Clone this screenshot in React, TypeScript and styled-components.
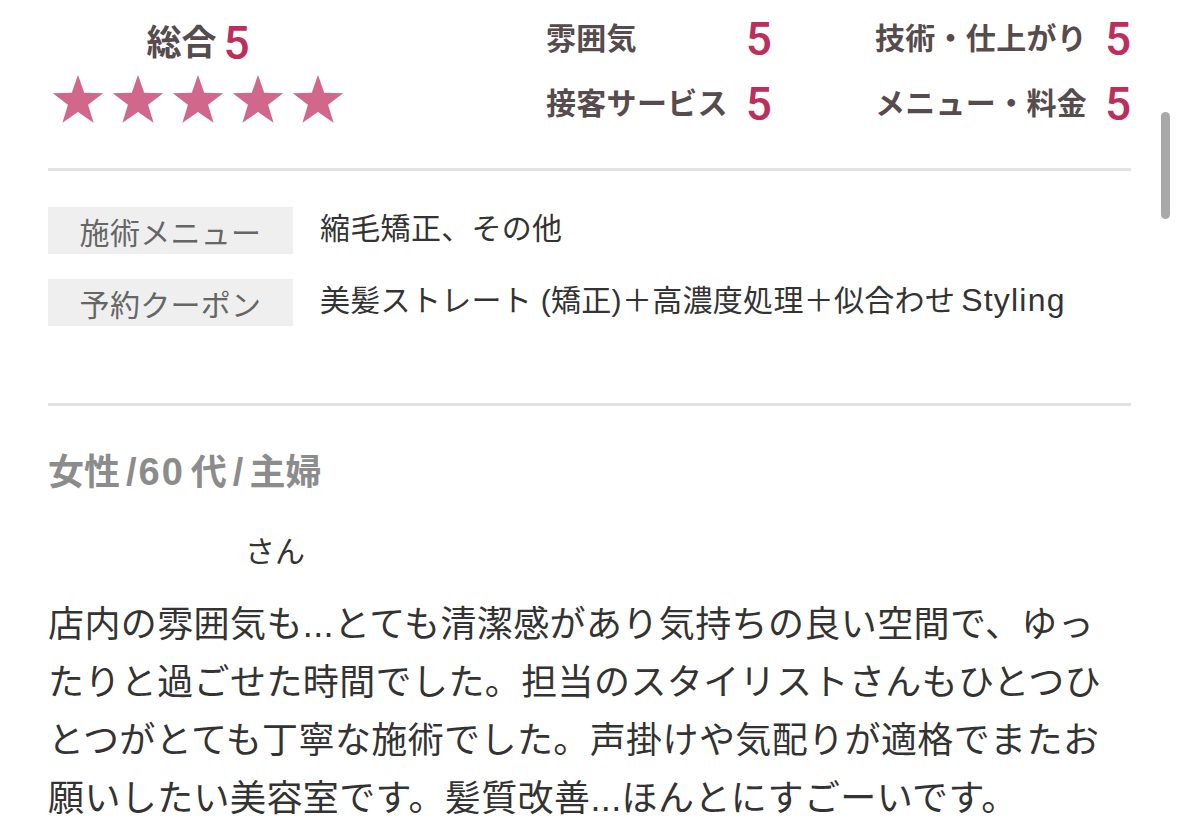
import React from "react";
import styled, { createGlobalStyle } from "styled-components";

const GlobalStyle = createGlobalStyle`
  html, body {
    margin: 0;
    padding: 0;
    background: #ffffff;
  }
  body {
    font-family: "Liberation Sans", "Noto Sans CJK JP", sans-serif;
    color: #333333;
    overflow: hidden;
  }
`;

const Page = styled.div`
  width: 1179px;
  height: 833px;
  box-sizing: border-box;
  padding: 0 48px;
  overflow: hidden;
  position: relative;
`;

const ScrollIndicator = styled.div`
  position: absolute;
  top: 112px;
  right: 9px;
  width: 9px;
  height: 107px;
  border-radius: 5px;
  background: #a9a9a9;
`;

const Summary = styled.section`
  display: flex;
  align-items: flex-start;
  height: 128px;
`;

const Overall = styled.div`
  width: 292px;
  margin-left: 4px;
  margin-right: 202px;
  flex-shrink: 0;
  padding-top: 19px;
  display: flex;
  flex-direction: column;
  align-items: center;
`;

const OverallHead = styled.div`
  display: flex;
  align-items: center;
  height: 48px;
  gap: 7px;
`;

const OverallLabel = styled.span`
  font-size: 35px;
  font-weight: 700;
  color: #564b4d;
  line-height: 48px;
`;

const Score = styled.span`
  font-family: "Roboto", "Liberation Sans", sans-serif;
  font-size: 46px;
  font-weight: 500;
  color: #be2e5c;
  line-height: 48px;
`;

const Stars = styled.div`
  display: flex;
  gap: 8px;
  margin-top: 7px;
`;

const StarIcon = styled.svg`
  display: block;
  width: 52px;
  height: 50px;
  fill: #d1688b;
`;

const Ratings = styled.div`
  display: flex;
  gap: 103px;
  padding-top: 15px;
  white-space: nowrap;
  flex-shrink: 0;
`;

const RatingColumn = styled.div`
  display: grid;
  grid-template-columns: auto auto;
  column-gap: 18px;
  row-gap: 17px;
  align-items: center;
`;

const RatingLabel = styled.span`
  font-size: 30px;
  font-weight: 700;
  letter-spacing: 0.3px;
  color: #564b4d;
  line-height: 48px;
`;

const Divider = styled.hr<{ $top: number }>`
  border: none;
  height: 3px;
  margin: ${(p) => p.$top}px 0 0;
  background: #e2e2e2;
`;

const InfoTable = styled.div`
  display: flex;
  flex-direction: column;
  gap: 25px;
  margin-top: 36px;
`;

const InfoRow = styled.div`
  display: flex;
  align-items: center;
  gap: 27px;
`;

const InfoLabel = styled.div`
  width: 245px;
  height: 47px;
  flex-shrink: 0;
  background: #efefef;
  color: #666666;
  font-size: 30px;
  display: flex;
  align-items: center;
  justify-content: center;
  letter-spacing: 0.3px;
`;

const InfoValue = styled.div`
  font-size: 30px;
  line-height: 44px;
  color: #333333;
  margin-top: -4px;
  white-space: nowrap;
  letter-spacing: 0.3px;
`;

const Latin = styled.span<{ $size?: number; $pad?: number; $track?: number }>`
  display: inline-block;
  font-size: ${(p) => (p.$size ? `${p.$size}px` : "inherit")};
  padding: 0 ${(p) => p.$pad ?? 0}px;
  letter-spacing: ${(p) => p.$track ?? 0}px;
`;

const Reviewer = styled.div`
  margin-top: 42px;
  font-size: 36px;
  font-weight: 700;
  line-height: 48px;
  color: #8c8c8c;
  white-space: nowrap;
`;

const Name = styled.div`
  margin-top: 33px;
  padding-left: 197px;
  font-size: 30px;
  line-height: 44px;
  color: #333333;
`;

const ReviewBody = styled.p`
  margin: 22px 0 0;
  font-size: 36px;
  line-height: 58px;
  letter-spacing: 0.4px;
  color: #333333;
  white-space: nowrap;
`;

const Star = () => (
  <StarIcon viewBox="-1 0 54 50">
    <polygon points="26,0 32.47,18.6 52.16,19 36.46,30.9 42.16,49.75 26,38.5 9.84,49.75 15.54,30.9 -0.16,19 19.53,18.6" />
  </StarIcon>
);

const ratingColumns = [
  [
    ["雰囲気", "5"],
    ["接客サービス", "5"],
  ],
  [
    ["技術・仕上がり", "5"],
    ["メニュー・料金", "5"],
  ],
];

const bodyLines = [
  "店内の雰囲気も...とても清潔感があり気持ちの良い空間で、ゆっ",
  "たりと過ごせた時間でした。担当のスタイリストさんもひとつひ",
  "とつがとても丁寧な施術でした。声掛けや気配りが適格でまたお",
  "願いしたい美容室です。髪質改善...ほんとにすごーいです。",
];

export default function App() {
  return (
    <>
      <GlobalStyle />
      <Page>
        <ScrollIndicator />
        <Summary>
          <Overall>
            <OverallHead>
              <OverallLabel>総合</OverallLabel>
              <Score>5</Score>
            </OverallHead>
            <Stars>
              {[0, 1, 2, 3, 4].map((i) => (
                <Star key={i} />
              ))}
            </Stars>
          </Overall>
          <Ratings>
            {ratingColumns.map((col, ci) => (
              <RatingColumn key={ci}>
                {col.map(([label, score]) => (
                  <React.Fragment key={label}>
                    <RatingLabel>{label}</RatingLabel>
                    <Score>{score}</Score>
                  </React.Fragment>
                ))}
              </RatingColumn>
            ))}
          </Ratings>
        </Summary>
        <Divider $top={40} />
        <InfoTable>
          <InfoRow>
            <InfoLabel>施術メニュー</InfoLabel>
            <InfoValue>縮毛矯正、その他</InfoValue>
          </InfoRow>
          <InfoRow>
            <InfoLabel>予約クーポン</InfoLabel>
            <InfoValue>
              美髪ストレート (矯正)＋高濃度処理＋似合わせ
              <Latin $size={32} $pad={6} $track={1.2}>
                Styling
              </Latin>
            </InfoValue>
          </InfoRow>
        </InfoTable>
        <Divider $top={77} />
        <Reviewer>
          女性
          <Latin $size={38} $pad={6} $track={2}>
            /60
          </Latin>
          代
          <Latin $size={38} $pad={6}>
            /
          </Latin>
          主婦
        </Reviewer>
        <Name>さん</Name>
        <ReviewBody>
          {bodyLines.map((line, i) => (
            <React.Fragment key={i}>
              {line}
              {i < bodyLines.length - 1 && <br />}
            </React.Fragment>
          ))}
        </ReviewBody>
      </Page>
    </>
  );
}
